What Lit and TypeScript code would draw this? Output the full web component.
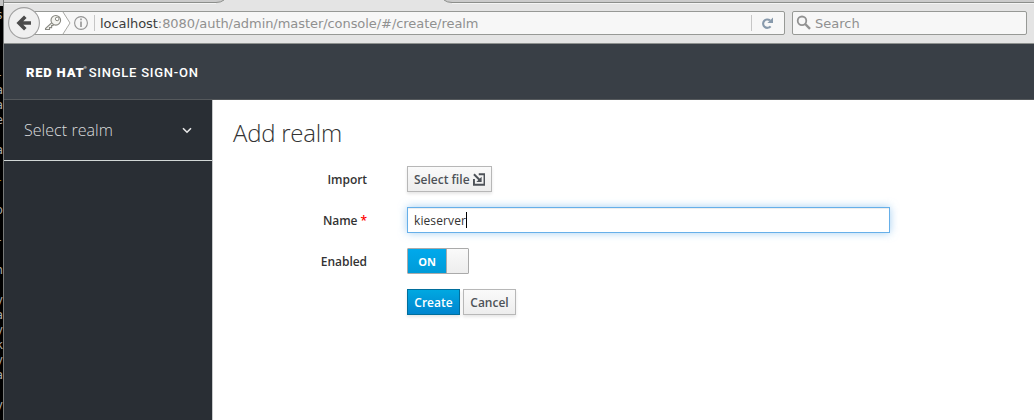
import { LitElement, html, css } from "lit";
import { customElement } from "lit/decorators.js";

const TERMINAL_ROWS = ["s", "", "", "", "-", "a", "a", "e", "", "a", "", "_", "", "o", "", "-", "", "h", "", "y", "a", "y", "k", "y", "a", "", "y", "-"];

@customElement("terminal-edge")
class TerminalEdge extends LitElement {
  static styles = css`
    :host { display: block; width: 3px; height: 420px; overflow: hidden; background: #000; color: #aaa; font: 12px/15px "DejaVu Sans Mono", monospace; }
    .cap { height: 6px; background: #c3c3c3; }
    .rows { display: flex; flex-direction: column; align-items: flex-end; padding-top: 2px; }
    .row { height: 15px; flex: none; }
    .gold { color: #a08000; }
  `;
  render() {
    return html`<div class="cap"></div><div class="rows">
      ${TERMINAL_ROWS.map((c) => html`<div class="row ${c === "_" ? "gold" : ""}">${c === "_" ? "-" : c}</div>`)}
    </div>`;
  }
}

@customElement("browser-bar")
class BrowserBar extends LitElement {
  static styles = css`
    :host { display: block; height: 44px; box-sizing: border-box; background: #e4e4e4; border-bottom: 1px solid #8e918f; font: 13px/22px "DejaVu Sans", sans-serif; color: #909090; }
    .tabs { height: 4px; }
    .strip { display: block; width: 1030px; height: 4px; }
    .bar { display: flex; align-items: center; height: 24px; padding: 7px 7px 0 4px; position: relative; }
    .field { box-sizing: border-box; height: 24px; border: 1px solid #979996; border-radius: 2px; background: #f7f7f7; display: flex; align-items: center; }
    .url { width: 766px; margin-left: 11px; }
    .ident { width: 80px; height: 22px; flex: none; }
    .host { color: #3c3c3c; }
    .addr { white-space: nowrap; letter-spacing: -0.06px; flex: 1; }
    .text { padding-top: 2px; }
    .search { flex: 1; margin-left: 7px; }
    .glass { width: 22px; height: 22px; flex: none; }
    .reload { width: 33px; height: 22px; flex: none; }
    .back { position: absolute; left: 3px; top: 2px; width: 34px; height: 34px; }
  `;
  render() {
    return html`
      <div class="tabs"><svg class="strip" viewBox="0 0 1030 4">
        <path d="M0 0H220Q217 2.5 212 2.5H0zM440 0Q443 2.5 448 2.5H1030V0z" fill="#cbcbcb"/>
        <path d="M0 3.5H212M448 3.5H1030" stroke="#f4f4f4"/>
        <path d="M0 2.5H212Q217 2.5 220 0M440 0Q443 2.5 448 2.5H1030" fill="none" stroke="#8c8e8b"/>
      </svg></div>
      <div class="bar">
        <div class="field url">
          <svg class="ident" viewBox="20 12 80 22">
            <path d="M20 12H63L70 23L63 34H20z" fill="#fff"/>
            <path d="M63 12L70 23L63 34" fill="none" stroke="#a7a7a3"/>
            <path d="M52.4 22.2L45.5 28.5V29.5H49.5V27.6H51.6V25.6L53.6 25.4" fill="#f2f2ee" stroke="#878780" stroke-width="1.1"/>
            <circle cx="55.8" cy="20.3" r="4.8" fill="#f4f4f0" stroke="#878780" stroke-width="1.1"/><circle cx="57.2" cy="18.9" r="1.8" fill="#fff" stroke="#878780"/>
            <circle cx="81" cy="23" r="6.4" fill="none" stroke="#949494" stroke-width="1.1"/><path d="M81 21.5V27M81 18.6V20.2" stroke="#949494" stroke-width="1.6"/>
            <path d="M94.5 15V31" stroke="#c6c6c6"/>
          </svg>
          <span class="addr text"><span class="host">localhost</span>:8080/auth/admin/master/console/#/create/realm</span>
          <svg class="reload" viewBox="751 12 33 22">
            <path d="M751.5 15V31" stroke="#c6c6c6"/>
            <path d="M770 20.4A4.2 4.2 0 1 0 770.6 26.3" fill="none" stroke="#8799ab" stroke-width="2.1"/><path d="M773 17.5V23H767.4z" fill="#8799ab"/>
          </svg>
        </div>
        <div class="field search">
          <svg class="glass" viewBox="793 12 22 22"><circle cx="802" cy="20.8" r="4.3" fill="none" stroke="#929292" stroke-width="1.8"/><path d="M805.2 24L810 28.8" stroke="#929292" stroke-width="2.4"/></svg>
          <span class="text">Search</span>
        </div>
        <svg class="back" viewBox="7 6 34 34">
          <circle cx="24" cy="23" r="15.4" fill="#f0f0f0" stroke="#a0a0a0" stroke-width="1.1"/>
          <path d="M31 23H20M25.3 16.7L19 23L25.3 29.3" fill="none" stroke="#4c4c4c" stroke-width="3.6"/>
        </svg>
      </div>`;
  }
}

@customElement("realm-form")
class RealmForm extends LitElement {
  static styles = css`
    :host { display: block; flex: 1; padding: 17px 0 0 20px; background: #fff; color: #333; font: 600 12px/28px "Open Sans", sans-serif; }
    h1 { margin: 0 0 17px; font-size: 24px; line-height: 32px; font-weight: 300; letter-spacing: -0.25px; }
    .form { display: grid; grid-template-columns: 134px 483px; column-gap: 40px; row-gap: 15px; grid-auto-rows: 26px; }
    .label { text-align: right; letter-spacing: -0.05px; }
    .req { color: #f00; }
    .cell { display: flex; gap: 3px; }
    .btn { box-sizing: border-box; height: 26px; padding: 0 6px; border: 1px solid #b7b7b7; background: linear-gradient(#fafafa, #ededed); color: #4d5258; line-height: 26px; box-shadow: 0 2px 3px rgba(3, 3, 3, .1); white-space: nowrap; display: flex; justify-content: center; }
    .file { width: 85px; gap: 3px; }
    .primary { width: 53px; background: linear-gradient(#00a8e1, #0085cf); border-color: #006e9c; color: #fff; }
    .cancel { width: 53px; }
    .input { box-sizing: border-box; width: 483px; height: 26px; border: 1px solid #66afe9; padding: 0 6px; display: flex; font-weight: 400; line-height: 26px; letter-spacing: 0.1px; box-shadow: inset 0 1px 1px rgba(0,0,0,.075), 0 0 8px rgba(102,175,233,.6); }
    .caret { width: 1px; height: 16px; margin-top: 4px; background: #000; }
    .switch { box-sizing: border-box; display: flex; width: 62px; height: 26px; border: 1px solid #aaa; border-radius: 1px; background: linear-gradient(#fafafa, #ededed); }
    .on { width: 38px; border-right: 1px solid #aaa; background: linear-gradient(#00a9ec, #009bd8); color: #fff; font-size: 11px; font-weight: 700; line-height: 26px; text-align: center; }
    .icon { width: 13px; height: 13px; margin-top: 6px; }
  `;
  render() {
    return html`
      <h1>Add realm</h1>
      <div class="form">
        <div class="label">Import</div>
        <div class="cell"><div class="btn file">Select file<svg class="icon" viewBox="0 0 13 13"><path d="M6 1H12V12H1V6" fill="none" stroke="#4d5258" stroke-width="2"/><path d="M1 1L7 7" stroke="#4d5258" stroke-width="2"/><path d="M9 3.5V9H3.5z" fill="#4d5258"/></svg></div></div>
        <div class="label">Name <span class="req">*</span></div>
        <div class="input">kieserver<span class="caret"></span></div>
        <div class="label">Enabled</div>
        <div class="switch"><div class="on">ON</div></div>
        <div></div>
        <div class="cell"><div class="btn primary">Create</div><div class="btn cancel">Cancel</div></div>
      </div>`;
  }
}

@customElement("app-root")
class AppRoot extends LitElement {
  static styles = css`
    :host { display: flex; width: 1034px; height: 420px; overflow: hidden; font-family: "Open Sans", sans-serif; }
    .window { box-sizing: border-box; width: 1031px; height: 420px; border-left: 1px solid #777a79; display: flex; flex-direction: column; }
    .header { box-sizing: border-box; height: 56px; flex: none; background: #393f46; border-bottom: 1px solid #55595c; padding: 2px 0 0 22px; display: flex; align-items: center; color: #fff; font: 500 13px/16px Roboto, sans-serif; white-space: pre; }
    .brand { font-weight: 900; letter-spacing: 0.8px; }
    .product { letter-spacing: 0.75px; }
    .reg { font-size: 4px; align-self: flex-start; margin: 14px 2px 0 -1px; }
    .main { flex: 1; display: flex; }
    .side { box-sizing: border-box; width: 209px; background: #292e34; border-right: 1px solid #c8cacb; }
    .realm { box-sizing: border-box; height: 61px; border-bottom: 1px solid #d1d7d6; display: flex; align-items: center; justify-content: space-between; padding: 0 20px; color: #dbdcdd; font-size: 16px; font-weight: 300; letter-spacing: 0.05px; }
    .chev { width: 10px; height: 7px; }
  `;
  render() {
    return html`
      <terminal-edge></terminal-edge>
      <div class="window">
        <browser-bar></browser-bar>
        <div class="header"><span class="brand">RED HAT</span><span class="reg">®</span><span class="product">SINGLE SIGN-ON</span></div>
        <div class="main">
          <div class="side"><div class="realm"><span>Select realm</span><svg class="chev" viewBox="0 0 10 7"><path d="M1 1.2L5 5.2L9 1.2" fill="none" stroke="#e8e8e8" stroke-width="1.6"/></svg></div></div>
          <realm-form></realm-form>
        </div>
      </div>`;
  }
}
